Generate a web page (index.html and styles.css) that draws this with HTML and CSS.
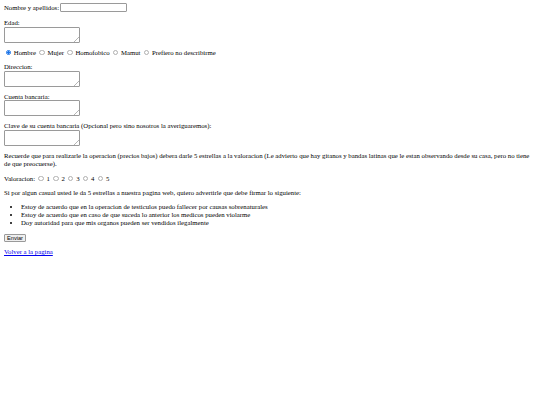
FILE: index.html
```html
<!DOCTYPE html>
<html>
<head>
<meta charset="utf-8">
<title>Formulario</title>
<link rel="stylesheet" href="styles.css">
</head>
<body>
<form class="form">
  <div class="row">
    <label>Nombre y apellidos:</label>
    <input class="text-input" type="text">
  </div>
  <div class="field field-first">
    <label class="label">Edad:</label>
    <textarea class="area"></textarea>
  </div>
  <div class="options">
    <label class="opt"><input class="radio" type="radio" name="g" checked> Hombre</label>
    <label class="opt"><input class="radio" type="radio" name="g"> Mujer</label>
    <label class="opt"><input class="radio" type="radio" name="g"> Homofobico</label>
    <label class="opt"><input class="radio" type="radio" name="g"> Mamut</label>
    <label class="opt"><input class="radio" type="radio" name="g"> Prefiero no describirme</label>
  </div>
  <div class="field">
    <label class="label">Direccion:</label>
    <textarea class="area"></textarea>
  </div>
  <div class="field">
    <label class="label">Cuenta bancaria:</label>
    <textarea class="area"></textarea>
  </div>
  <div class="field">
    <label class="label">Clave de su cuenta bancaria (Opcional pero sino nosotros la averiguaremos):</label>
    <textarea class="area"></textarea>
  </div>
  <p class="note">Recuerde que para realizarle la operacion (precios bajos) debera darle 5 estrellas a la valoracion (Le advierto que hay gitanos y bandas latinas que le estan observando desde su casa, pero no tiene de que preocuerse).</p>
  <div class="options rating">
    <span class="opt-label">Valoracion:</span>
    <label class="opt"><input class="radio" type="radio" name="v"> 1</label>
    <label class="opt"><input class="radio" type="radio" name="v"> 2</label>
    <label class="opt"><input class="radio" type="radio" name="v"> 3</label>
    <label class="opt"><input class="radio" type="radio" name="v"> 4</label>
    <label class="opt"><input class="radio" type="radio" name="v"> 5</label>
  </div>
  <p class="warn">Si por algun casual usted le da 5 estrellas a nuestra pagina web, quiero advertirle que debe firmar lo siguiente:</p>
  <ul class="terms">
    <li>Estoy de acuerdo que en la operacion de testiculos puedo fallecer por causas sobrenaturales</li>
    <li>Estoy de acuerdo que en caso de que suceda lo anterior los medicos pueden violarme</li>
    <li>Doy autoridad para que mis organos pueden ser vendidos ilegalmente</li>
  </ul>
  <button class="submit" type="submit">Enviar</button>
</form>
<p class="back"><a class="link" href="#">Volver a la pagina</a></p>
</body>
</html>
```
FILE: styles.css
```css
html {
  background: #fff;
}
body {
  margin: 3px 4px;
  font-family: "Liberation Serif", "Times New Roman", serif;
  font-size: 6.75px;
  line-height: 7.8px;
  color: #000;
}
.form {
  margin: 0;
}
.row {
  display: flex;
  align-items: center;
  gap: 1.2px;
  height: 9px;
}
.text-input {
  box-sizing: border-box;
  width: 67px;
  height: 9px;
  margin: 0;
  padding: 0 1px;
  border: 1px solid #9a9a9a;
  border-radius: 1px;
  font-size: 5.6px;
  background: #fff;
}
.field {
  margin-top: 6px;
}
.field-first {
  margin-top: 7px;
}
.label {
  display: block;
  height: 7.8px;
}
.area {
  display: block;
  box-sizing: border-box;
  width: 76px;
  height: 16px;
  margin: 0;
  padding: 1px;
  border: 1px solid #9a9a9a;
  border-radius: 1px;
  font-size: 5.6px;
  resize: none;
  background:
    linear-gradient(135deg, transparent 0 45%, #b5b5b5 45% 55%, transparent 55%) right 1px bottom 1px / 3px 3px no-repeat,
    linear-gradient(135deg, transparent 0 45%, #b5b5b5 45% 55%, transparent 55%) right 0 bottom 0 / 5px 5px no-repeat,
    #fff;
}
.options {
  display: flex;
  align-items: center;
  height: 8px;
  margin-top: 6px;
  margin-bottom: 1px;
}
.opt {
  display: inline-flex;
  align-items: center;
  white-space: pre;
  margin-left: 1.6px;
}
.opt:first-child {
  margin-left: 0;
}
.opt-label {
  white-space: pre;
}
.radio {
  -webkit-appearance: none;
  appearance: none;
  box-sizing: border-box;
  width: 5.4px;
  height: 5.4px;
  margin: 0 1.2px 0 1.6px;
  border: 1px solid #b0b0b0;
  border-radius: 50%;
  background: #fff;
  flex: none;
}
.radio:checked {
  border-color: #1a73e8;
  background: radial-gradient(circle, #1a73e8 0 55%, #fff 60%);
}
.note {
  margin: 6px 0 0;
}
.rating {
  margin-top: 7px;
  margin-bottom: 0;
}
.warn {
  margin: 6.5px 0 0;
}
.terms {
  margin: 6.4px 0 0;
  padding-left: 16.9px;
}
.submit {
  display: block;
  box-sizing: border-box;
  width: 22px;
  height: 8px;
  margin-top: 7.2px;
  padding: 0;
  border: 1px solid #9a9a9a;
  border-radius: 1px;
  background: #efefef;
  font-family: "Liberation Sans", Arial, sans-serif;
  font-size: 5.6px;
  line-height: 6px;
  color: #000;
}
.back {
  margin: 6px 0 0;
}
.link {
  color: #0000ee;
  text-decoration: underline;
  text-decoration-thickness: 1px;
  text-underline-offset: 1px;
}
```
